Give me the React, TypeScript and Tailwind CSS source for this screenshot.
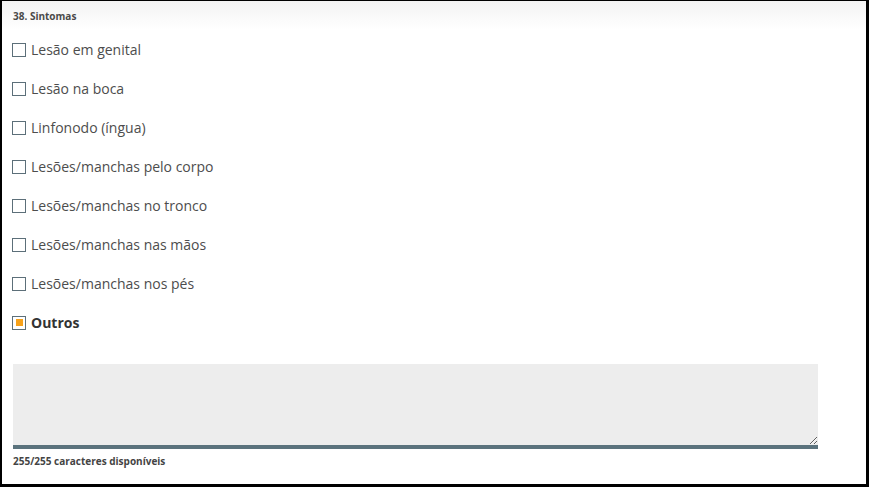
const options = [
  'Lesão em genital',
  'Lesão na boca',
  'Linfonodo (íngua)',
  'Lesões/manchas pelo corpo',
  'Lesões/manchas no tronco',
  'Lesões/manchas nas mãos',
  'Lesões/manchas nos pés',
];

const Box = ({ checked }: { checked?: boolean }) => (
  <span className="w-[14px] h-[14px] border border-[#5c6f79] bg-white flex items-center justify-center shrink-0">
    {checked && <span className="w-[7px] h-[7px] bg-[#f7a21b]" />}
  </span>
);

export default function App() {
  return (
    <div
      className="w-[869px] h-[487px] bg-white border-t border-l-2 border-r-[3px] border-b-[3px] border-black text-[#444] overflow-hidden"
      style={{ fontFamily: '"Open Sans", "Noto Sans", sans-serif' }}
    >
      <div className="h-[29px] bg-gradient-to-b from-[#f3f3f3] to-white px-[11px] pt-[8px] text-[10px] leading-[14px] font-bold text-[#4a4a4a]">
        38. Sintomas
      </div>
      <div className="flex flex-col pl-[10px]">
        {options.map((o) => (
          <label key={o} className="h-[39px] flex items-center gap-[5px] text-[14px] text-[#4d4d4d]">
            <Box />
            <span>{o}</span>
          </label>
        ))}
        <label className="h-[39px] flex items-center gap-[5px] text-[14px] font-bold text-[#333]">
          <Box checked />
          <span>Outros</span>
        </label>
      </div>
      <div className="pl-[11px] mt-[22px]">
        <textarea className="block w-[805px] h-[85px] bg-[#ededed] border-b-4 border-[#5b737d] outline-none resize-y" />
        <div className="text-[10px] leading-[14px] font-bold text-[#444] mt-[5px]">255/255 caracteres disponíveis</div>
      </div>
    </div>
  );
}
